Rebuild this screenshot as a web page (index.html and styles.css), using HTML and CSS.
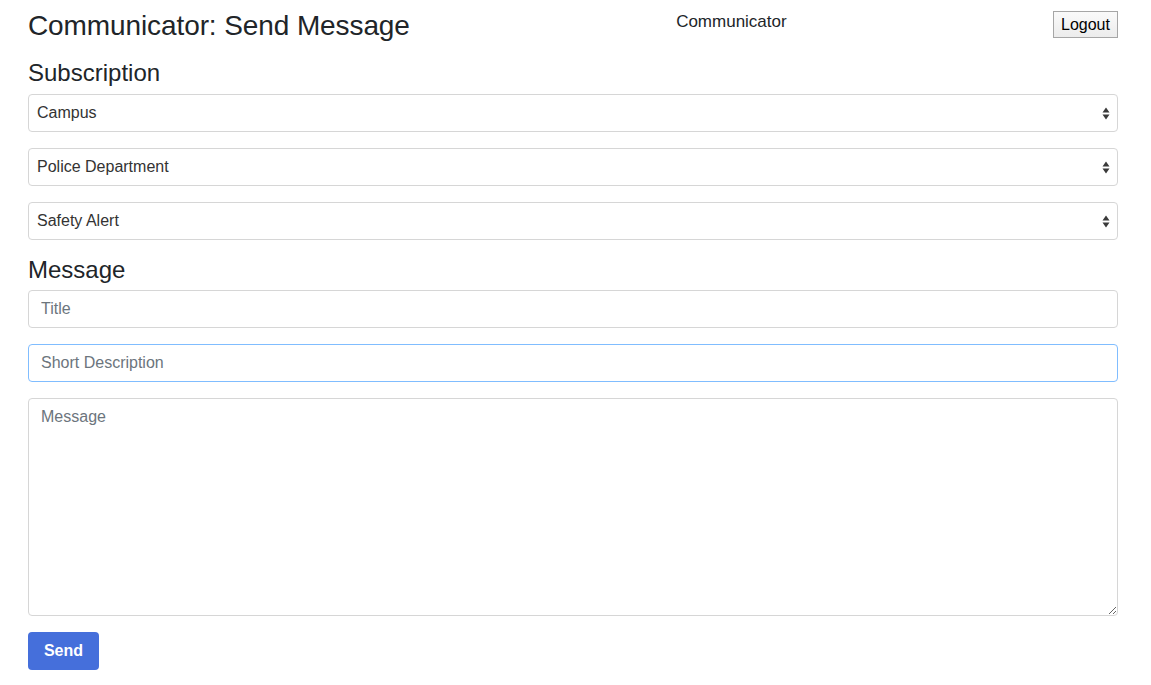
FILE: index.html
```html
<!DOCTYPE html>
<html lang="en">
<head>
<meta charset="utf-8">
<title>Communicator: Send Message</title>
<link rel="stylesheet" href="styles.css">
</head>
<body>
<div class="page">
  <header class="topbar">
    <h1 class="title">Communicator: Send Message</h1>
    <div class="brand">Communicator</div>
    <button class="logout" type="button">Logout</button>
  </header>

  <h2 class="section">Subscription</h2>
  <div class="group select-wrap">
    <select class="control select"><option>Campus</option></select>
    <svg class="arrows" width="8" height="13" viewBox="0 0 8 13"><path d="M4 0.5L7.5 5.5H0.5Z M4 12.5L7.5 7.5H0.5Z" fill="#3a3a3a"/></svg>
  </div>
  <div class="group select-wrap">
    <select class="control select"><option>Police Department</option></select>
    <svg class="arrows" width="8" height="13" viewBox="0 0 8 13"><path d="M4 0.5L7.5 5.5H0.5Z M4 12.5L7.5 7.5H0.5Z" fill="#3a3a3a"/></svg>
  </div>
  <div class="group select-wrap">
    <select class="control select"><option>Safety Alert</option></select>
    <svg class="arrows" width="8" height="13" viewBox="0 0 8 13"><path d="M4 0.5L7.5 5.5H0.5Z M4 12.5L7.5 7.5H0.5Z" fill="#3a3a3a"/></svg>
  </div>

  <h2 class="section">Message</h2>
  <div class="group"><input class="control input" type="text" placeholder="Title"></div>
  <div class="group"><input class="control input focused" type="text" placeholder="Short Description" autofocus></div>
  <div class="group"><textarea class="control textarea" placeholder="Message"></textarea></div>
  <button class="send" type="button">Send</button>
</div>
</body>
</html>
```
FILE: styles.css
```css
* { box-sizing: border-box; }
html, body { margin: 0; padding: 0; background: #fff; }
body {
  font-family: "Liberation Sans", Arial, Helvetica, sans-serif;
  color: #212529;
  font-size: 16px;
  line-height: 1.5;
}
.page {
  width: 1090px;
  margin-left: 28px;
  padding-top: 9px;
}
.topbar {
  display: flex;
  justify-content: space-between;
  align-items: flex-start;
}
.title {
  margin: 0;
  font-size: 28px;
  font-weight: 500;
  line-height: 34px;
  letter-spacing: -0.1px;
}
.brand {
  margin-top: 1px;
  font-size: 17px;
  line-height: 24px;
  color: #212529;
}
.logout {
  margin-top: 2px;
  height: 27px;
  width: 65px;
  padding: 0;
  font-family: "Liberation Sans", Arial, sans-serif;
  font-size: 16px;
  color: #000;
  background: linear-gradient(#fafafa, #ececec);
  border: 1px solid #a6a6a6;
  border-radius: 0;
}
.section {
  margin: 16px 0 6px;
  font-size: 24px;
  font-weight: 500;
  line-height: 1.2;
}
.group + .section { margin-bottom: 5px; }
.group { margin-bottom: 16px; position: relative; }
.control {
  display: block;
  width: 100%;
  height: 38px;
  border: 1px solid #d6d6d6;
  border-radius: 4px;
  background: #fff;
  font-family: "Liberation Sans", Arial, sans-serif;
  font-size: 16px;
  color: #495057;
  outline: none;
}
.select {
  appearance: none;
  -webkit-appearance: none;
  padding: 0 24px 0 8px;
  color: #333;
  font-size: 16px;
}
.arrows {
  position: absolute;
  right: 8px;
  top: 13px;
  pointer-events: none;
}
.input {
  padding: 6px 12px;
}
.input::placeholder, .textarea::placeholder { color: #6c757d; opacity: 1; }
.focused, .input:focus { border-color: #80bdff; }
.textarea {
  height: 218px;
  padding: 6px 12px;
  resize: vertical;
  line-height: 1.5;
}
.send {
  display: block;
  height: 38px;
  width: 71px;
  padding: 0;
  border: 0;
  border-radius: 4px;
  background: #456fdb;
  color: #fff;
  font-family: "Liberation Sans", Arial, sans-serif;
  font-size: 16px;
  font-weight: 600;
}
```
